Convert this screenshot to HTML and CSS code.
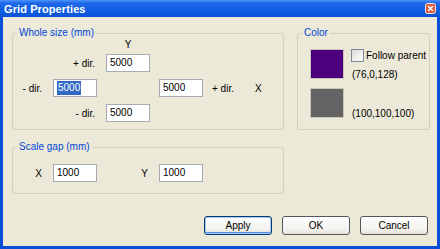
FILE: index.html
```html
<!DOCTYPE html>
<html lang="en">

<head>
    <meta charset="UTF-8">
    <meta name="viewport" content="width=device-width, initial-scale=1.0">
    <title>Grid Properties</title>
    <link rel="stylesheet" href="styles.css">
</head>

<body>
    <div class="window">
        <div class="titlebar">
            <span class="title">Grid Properties</span>
            <span class="close">
                <svg width="11" height="11" viewBox="0 0 11 11">
                    <rect x="0.5" y="0.5" width="10" height="10" rx="2" fill="#d9583b" stroke="#f4e4dc"/>
                    <path d="M3 3 L8 8 M8 3 L3 8" stroke="#fff" stroke-width="1.6"/>
                </svg>
            </span>
        </div>
        <div class="client">
            <div class="groups">
                <div class="left">
                    <fieldset class="group whole">
                        <legend>Whole size (mm)</legend>
                        <div class="grid">
                            <span class="axis-y">Y</span>
                            <span class="lbl r c2 row2">+ dir.</span>
                            <div class="field c3 row2">5000</div>
                            <span class="lbl r c1 row3">- dir.</span>
                            <div class="field c2 row3"><span class="sel">5000</span></div>
                            <div class="field c4 row3">5000</div>
                            <span class="lbl c5 row3">+ dir.</span>
                            <span class="lbl c6 row3">X</span>
                            <span class="lbl r c2 row4">- dir.</span>
                            <div class="field c3 row4">5000</div>
                        </div>
                    </fieldset>
                    <fieldset class="group scale">
                        <legend>Scale gap (mm)</legend>
                        <div class="grid">
                            <span class="lbl r c1">X</span>
                            <div class="field c2">1000</div>
                            <span class="lbl r c3">Y</span>
                            <div class="field c4">1000</div>
                        </div>
                    </fieldset>
                </div>
                <fieldset class="group color">
                    <legend>Color</legend>
                    <div class="colors">
                        <span class="swatch purple"></span>
                        <div class="info">
                            <label class="check"><span class="box"></span>Follow parent</label>
                            <span>(76,0,128)</span>
                        </div>
                        <span class="swatch gray"></span>
                        <div class="info bottom">
                            <span>(100,100,100)</span>
                        </div>
                    </div>
                </fieldset>
            </div>
            <div class="buttons">
                <button class="btn default">Apply</button>
                <button class="btn">OK</button>
                <button class="btn">Cancel</button>
            </div>
        </div>
    </div>
</body>

</html>
```

FILE: styles.css
```css
* {
    padding: 0;
    margin: 0;
    box-sizing: border-box;
}

body {
    width: 440px;
    height: 249px;
    font-family: "Liberation Sans", Arial, sans-serif;
    font-size: 10px;
    color: #000;
    overflow: hidden;
}

.window {
    display: flex;
    flex-direction: column;
    width: 440px;
    height: 249px;
    padding: 0 3px 3px 3px;
    background: #0a4fd8;
}

.titlebar {
    display: flex;
    align-items: center;
    justify-content: space-between;
    height: 17px;
    margin: 0 -3px;
    padding: 0 3px 0 4px;
    background: linear-gradient(#4a95fa 0, #2068e8 3px, #125fe4 9px, #0c58dc 15px, #0a4fd8 17px);
}

.title {
    color: #fff;
    font-weight: bold;
    font-size: 11px;
    letter-spacing: 0.1px;
}

.close {
    display: flex;
    margin-right: 1px;
}

.client {
    flex: 1;
    display: flex;
    flex-direction: column;
    padding: 10px 7px 0 9px;
    background: #ece9d8;
}

.groups {
    display: flex;
    gap: 13px;
}

.left {
    display: flex;
    flex-direction: column;
    gap: 11px;
    width: 272px;
}

.group {
    border: 1px solid #d0d0bf;
    border-radius: 3px;
    padding: 0;
}

.group legend {
    margin-left: 4px;
    padding: 0 2px;
    line-height: 12px;
    color: #0046d5;
}

.whole {
    height: 103px;
}

.scale {
    height: 53px;
}

.grid {
    display: grid;
    grid-template-columns: 31px 44px 44px 44px 34px auto;
    column-gap: 9px;
    row-gap: 7px;
    align-items: center;
}

.whole .grid {
    grid-template-rows: 8px 18px 18px 18px;
}

.axis-y {
    grid-column: 3;
    grid-row: 1;
    text-align: center;
    margin-top: 3px;
}

.row2 { grid-row: 2; }
.row3 { grid-row: 3; }
.row4 { grid-row: 4; }

.scale .grid {
    margin-top: 11px;
}

.c1 { grid-column: 1; }
.c2 { grid-column: 2; }
.c3 { grid-column: 3; }
.c4 { grid-column: 4; }
.c5 { grid-column: 5; }
.c6 { grid-column: 6; }

.lbl.r {
    text-align: right;
    padding-right: 2px;
}

.field {
    height: 18px;
    padding: 0 3px;
    line-height: 16px;
    background: #fff;
    border: 1px solid #a5acb2;
}

.sel {
    display: inline-block;
    padding: 0 1px;
    background: #316ac5;
    color: #fff;
    line-height: 14px;
}

.color {
    width: 133px;
    height: 103px;
}

.colors {
    display: grid;
    grid-template-columns: 34px auto;
    grid-template-rows: 30px 30px;
    column-gap: 8px;
    row-gap: 9px;
    padding: 10px 0 0 12px;
}

.swatch {
    border: 1px solid #c9c6b6;
}

.purple {
    background: #4c0080;
}

.gray {
    background: #646464;
}

.info {
    display: flex;
    flex-direction: column;
    justify-content: space-between;
    white-space: nowrap;
    margin-bottom: -1px;
}

.info.bottom {
    justify-content: flex-end;
}

.check {
    display: flex;
    align-items: center;
    gap: 2px;
    margin-left: -1px;
}

.box {
    width: 13px;
    height: 13px;
    background: linear-gradient(135deg, #dcdcd7, #fff);
    border: 1px solid #7b8a9a;
}

.buttons {
    display: flex;
    justify-content: flex-end;
    gap: 10px;
    margin-top: 22px;
    padding-right: 2px;
}

.btn {
    width: 68px;
    height: 19px;
    font-family: inherit;
    font-size: 10px;
    color: #000;
    background: linear-gradient(#fff, #f4f3ee 70%, #e3e2da);
    border: 1px solid #55575c;
    border-radius: 3px;
}

.btn.default {
    border-color: #003c74;
    box-shadow: inset 0 0 0 1px #a9c8f5, inset 0 -1px 0 1px #5a8fe0;
}
```
